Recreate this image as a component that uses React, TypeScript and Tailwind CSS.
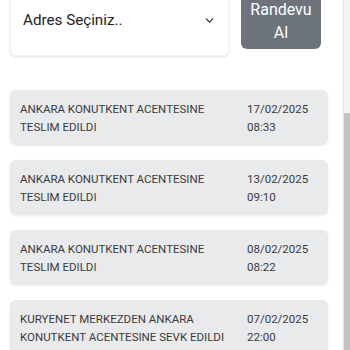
import React from 'react';

interface Movement {
  text: string;
  date: string;
  time: string;
}

const movements: Movement[] = [
  { text: 'ANKARA KONUTKENT ACENTESINE TESLIM EDILDI', date: '17/02/2025', time: '08:33' },
  { text: 'ANKARA KONUTKENT ACENTESINE TESLIM EDILDI', date: '13/02/2025', time: '09:10' },
  { text: 'ANKARA KONUTKENT ACENTESINE TESLIM EDILDI', date: '08/02/2025', time: '08:22' },
  { text: 'KURYENET MERKEZDEN ANKARA KONUTKENT ACENTESINE SEVK EDILDI', date: '07/02/2025', time: '22:00' },
];

export default function App() {
  return (
    <div className="flex w-[350px] h-[350px] overflow-hidden bg-white font-['Roboto','Liberation_Sans',sans-serif]">
      <div className="flex-1 flex flex-col">
        {/* Top bar: address select + button */}
        <div className="flex items-start gap-3 pl-[10px] -mt-4">
          <div className="w-[219px] h-[72px] bg-white rounded-md shadow-[0_1px_3px_rgba(0,0,0,0.12)] border border-gray-100 flex items-center justify-between pl-3 pr-3">
            <span className="text-[15.2px] text-[#222]">Adres Seçiniz..</span>
            <svg width="13" height="13" viewBox="0 0 24 24" fill="none" stroke="#333" strokeWidth="2.5" strokeLinecap="round" strokeLinejoin="round">
              <path d="M6 9l6 6 6-6" />
            </svg>
          </div>
          <button className="w-[80px] mt-[8px] pt-[6px] pb-[5px] rounded-md bg-[#6c737d] text-white text-[16px] leading-[23px] text-center">
            Randevu
            <br />
            Al
          </button>
        </div>

        {/* Movement list */}
        <div className="flex flex-col gap-[15px] mt-[34px] pl-[10px] pr-[15px]">
          {movements.map((m, i) => (
            <div
              key={i}
              className="flex bg-[#e9eaec] rounded-md shadow-[0_1px_3px_rgba(0,0,0,0.08)] h-[55px] pl-[10px] pt-[10px] text-[11.5px] leading-[18px] text-[#3b3b3b]"
            >
              <div className="w-[227px] pr-2">{m.text}</div>
              <div>
                <div>{m.date}</div>
                <div>{m.time}</div>
              </div>
            </div>
          ))}
        </div>
      </div>

      {/* Scrollbar */}
      <div className="w-[7px] flex flex-col border-l border-[#e6e6e6]">
        <div className="h-[113px] bg-[#f4f4f4]" />
        <div className="flex-1 bg-[#c3c3c3]" />
      </div>
    </div>
  );
}
